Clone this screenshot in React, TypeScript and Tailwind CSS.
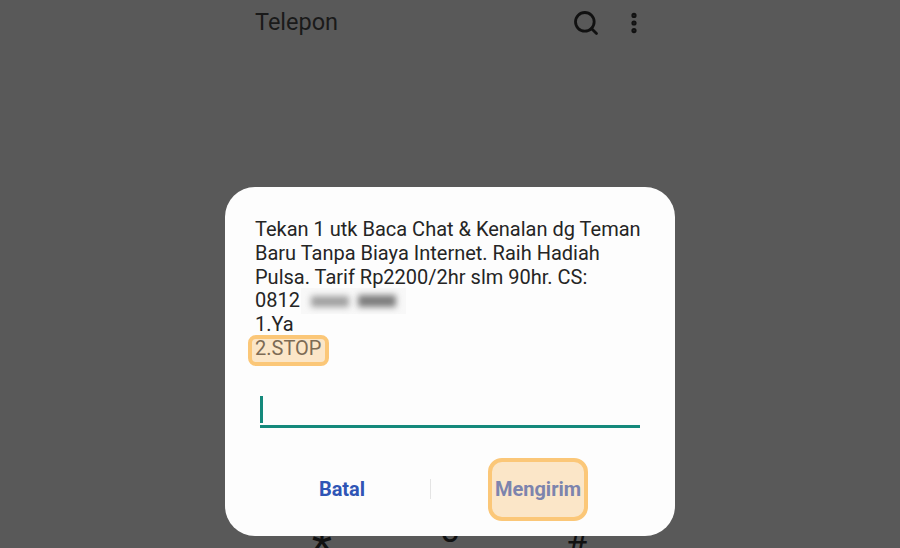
import { MoreVertical, Search } from "lucide-react";

export default function App() {
  return (
    <div className="w-[900px] h-[548px] overflow-hidden bg-[#595959] font-['Roboto',sans-serif] text-[#1c1c1c] flex flex-col">
      <div className="h-[45px] shrink-0 pl-[255px] flex items-center">
        <span className="w-[317px] text-[23.5px] leading-none text-[#1a1a1a]">Telepon</span>
        <Search size={28} strokeWidth={2.4} className="text-[#111]" />
        <MoreVertical size={26} strokeWidth={2.8} className="ml-[21px] text-[#111]" />
      </div>

      <div className="relative z-10 shrink-0 ml-[225px] mt-[142px] w-[450px] h-[349px] rounded-[30px] bg-[#fdfdfd] px-[30px] pt-[31px] flex flex-col">
        <div className="text-[20px] leading-[23.8px] text-[#252525] whitespace-nowrap">
          <div>Tekan 1 utk Baca Chat &amp; Kenalan dg Teman</div>
          <div>Baru Tanpa Biaya Internet. Raih Hadiah</div>
          <div>Pulsa. Tarif Rp2200/2hr slm 90hr. CS:</div>
          <div className="flex items-center h-[23.8px]">
            0812
            <span className="ml-px w-[105px] h-[26px] shrink-0 bg-[#f8f8f8] flex items-center justify-center gap-[9px]">
              <span className="w-[38px] h-[11px] bg-[#a0a0a0] blur-[3px]" />
              <span className="w-[38px] h-[12px] bg-[#7c7c7c] blur-[3px]" />
            </span>
          </div>
          <div>1.Ya</div>
          <div className="-mt-[2px] -ml-[7px] w-[81px] h-[31px] rounded-[8px] border-[4px] border-[#fbc778] bg-[#fbe6c8] pl-[3px] text-[#7d6b55] leading-[18px]">
            2.STOP
          </div>
        </div>

        <div className="mt-[30px] ml-[5px] w-[380px] h-[32px] border-b-[3px] border-[#14897b]">
          <div className="w-[3px] h-[27px] bg-[#14897b]" />
        </div>

        <div className="mt-[30px] h-[63px] ml-[-5px] flex items-center">
          <div className="w-[180px] text-center text-[20px] font-bold text-[#2f55b5] pl-[4px]">Batal</div>
          <div className="w-px h-[20px] bg-[#e4e4e4]" />
          <div className="ml-[57px] w-[100px] h-[63px] rounded-[14px] border-[4px] border-[#fbc778] bg-[#fbe6c8] flex items-center justify-center text-[20px] font-bold text-[#7d84ad]">
            Mengirim
          </div>
        </div>
      </div>

      <div className="shrink-0 -mt-[26px] h-[38px] overflow-hidden pl-[302px] flex items-start text-[36px] leading-[40px] text-[#111]">
        <span className="w-[40px] text-center text-[46px] mt-[18px]">*</span>
        <span className="ml-[88px] w-[40px] text-center">0</span>
        <span className="ml-[86px] w-[40px] text-center mt-[18px]">#</span>
      </div>
    </div>
  );
}
